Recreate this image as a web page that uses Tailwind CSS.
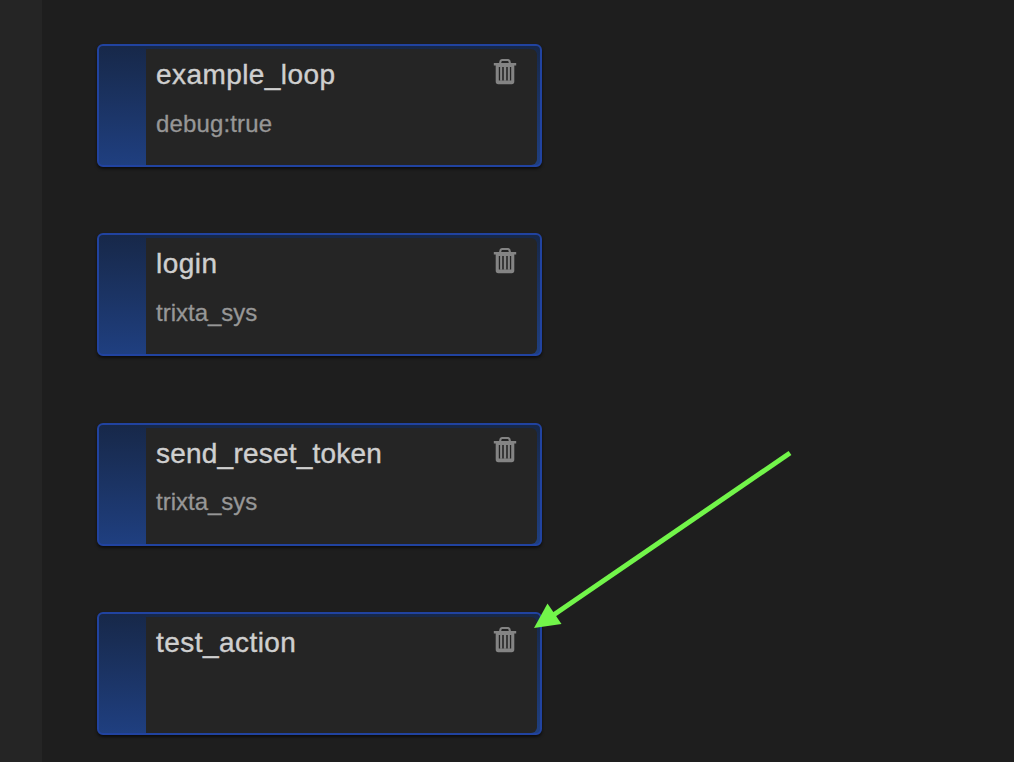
<!DOCTYPE html>
<html lang="en">
<head>
<meta charset="utf-8">
<title>Actions</title>
<script src="https://cdn.jsdelivr.net/npm/@tailwindcss/browser@4"></script>
</head>
<body class="relative flex h-[762px] w-[1014px] overflow-hidden bg-[#1e1e1e] font-['Liberation_Sans',Arial,sans-serif]">
<svg class="hidden"><symbol id="trash" viewBox="0 0 24 28"><path fill="none" stroke="#848484" stroke-width="2.1" d="M7 5.5 L7.6 3 Q8 2 9 2 H15 Q16 2 16.4 3 L17 5.5"/><path fill="#848484" fill-rule="evenodd" d="M.8 5H23.2V7.4H21.3V23.5Q21.3 26.3 18.7 26.3H5.3Q2.7 26.3 2.7 23.5V7.4H.8ZM5.8 9V22.5H18.2V9Z"/><path fill="#848484" d="M7.1 8.8H9.2V22.8H7.1ZM10.8 8.8H13.2V22.8H10.8ZM14.8 8.8H16.9V22.8H14.8Z"/></symbol></svg>
<aside class="w-[42px] shrink-0 bg-[#252525]"></aside>
<main class="flex flex-col gap-[66.4px] pt-11 pl-[55px]">
  <article class="h-[123px] w-[445px] shrink-0 rounded-[6px] border-2 border-[#2143a0] bg-linear-to-b from-[#172849] to-[#1f3f80] pt-[3px] pr-[3px] pl-[47px] shadow-[0_2px_3px_rgba(0,0,0,0.6)]">
    <div class="flex h-full items-start justify-between rounded-r-[6px] bg-[#252525] pr-5 pl-[10px]">
      <div><h2 class="mt-[10px] text-[28px] leading-8 tracking-[0.42px] text-[#cfcfcf] [-webkit-text-stroke:0.4px_#cfcfcf]">example_loop</h2><p class="mt-[19px] text-[24px] leading-7 tracking-[0.15px] text-[#979797] [-webkit-text-stroke:0.3px_#979797]">debug:true</p></div>
      <svg class="mt-[9px] h-7 w-6"><use href="#trash"/></svg>
    </div>
  </article>
  <article class="h-[123px] w-[445px] shrink-0 rounded-[6px] border-2 border-[#2143a0] bg-linear-to-b from-[#172849] to-[#1f3f80] pt-[3px] pr-[3px] pl-[47px] shadow-[0_2px_3px_rgba(0,0,0,0.6)]">
    <div class="flex h-full items-start justify-between rounded-r-[6px] bg-[#252525] pr-5 pl-[10px]">
      <div><h2 class="mt-[10px] text-[28px] leading-8 tracking-[0.45px] text-[#cfcfcf] [-webkit-text-stroke:0.4px_#cfcfcf]">login</h2><p class="mt-[19px] text-[24px] leading-7 text-[#979797] [-webkit-text-stroke:0.3px_#979797]">trixta_sys</p></div>
      <svg class="mt-[9px] h-7 w-6"><use href="#trash"/></svg>
    </div>
  </article>
  <article class="h-[123px] w-[445px] shrink-0 rounded-[6px] border-2 border-[#2143a0] bg-linear-to-b from-[#172849] to-[#1f3f80] pt-[3px] pr-[3px] pl-[47px] shadow-[0_2px_3px_rgba(0,0,0,0.6)]">
    <div class="flex h-full items-start justify-between rounded-r-[6px] bg-[#252525] pr-5 pl-[10px]">
      <div><h2 class="mt-[10px] text-[28px] leading-8 tracking-[0.22px] text-[#cfcfcf] [-webkit-text-stroke:0.4px_#cfcfcf]">send_reset_token</h2><p class="mt-[18px] text-[24px] leading-7 text-[#979797] [-webkit-text-stroke:0.3px_#979797]">trixta_sys</p></div>
      <svg class="mt-2 h-7 w-6"><use href="#trash"/></svg>
    </div>
  </article>
  <article class="h-[123px] w-[445px] shrink-0 rounded-[6px] border-2 border-[#2143a0] bg-linear-to-b from-[#172849] to-[#1f3f80] pt-[3px] pr-[3px] pl-[47px] shadow-[0_2px_3px_rgba(0,0,0,0.6)]">
    <div class="flex h-full items-start justify-between rounded-r-[6px] bg-[#252525] pr-5 pl-[10px]">
      <h2 class="mt-[10px] text-[28px] leading-8 tracking-[0.45px] text-[#cfcfcf] [-webkit-text-stroke:0.4px_#cfcfcf]">test_action</h2>
      <svg class="mt-[9px] h-7 w-6"><use href="#trash"/></svg>
    </div>
  </article>
</main>
<svg class="absolute inset-0 h-[762px] w-[1014px]" viewBox="0 0 1014 762"><path stroke="#72f54a" stroke-width="5" d="M790 453 L552 616"/><path fill="#72f54a" d="M534 628 L547.5 603.5 L561.5 624Z"/></svg>
</body>
</html>
